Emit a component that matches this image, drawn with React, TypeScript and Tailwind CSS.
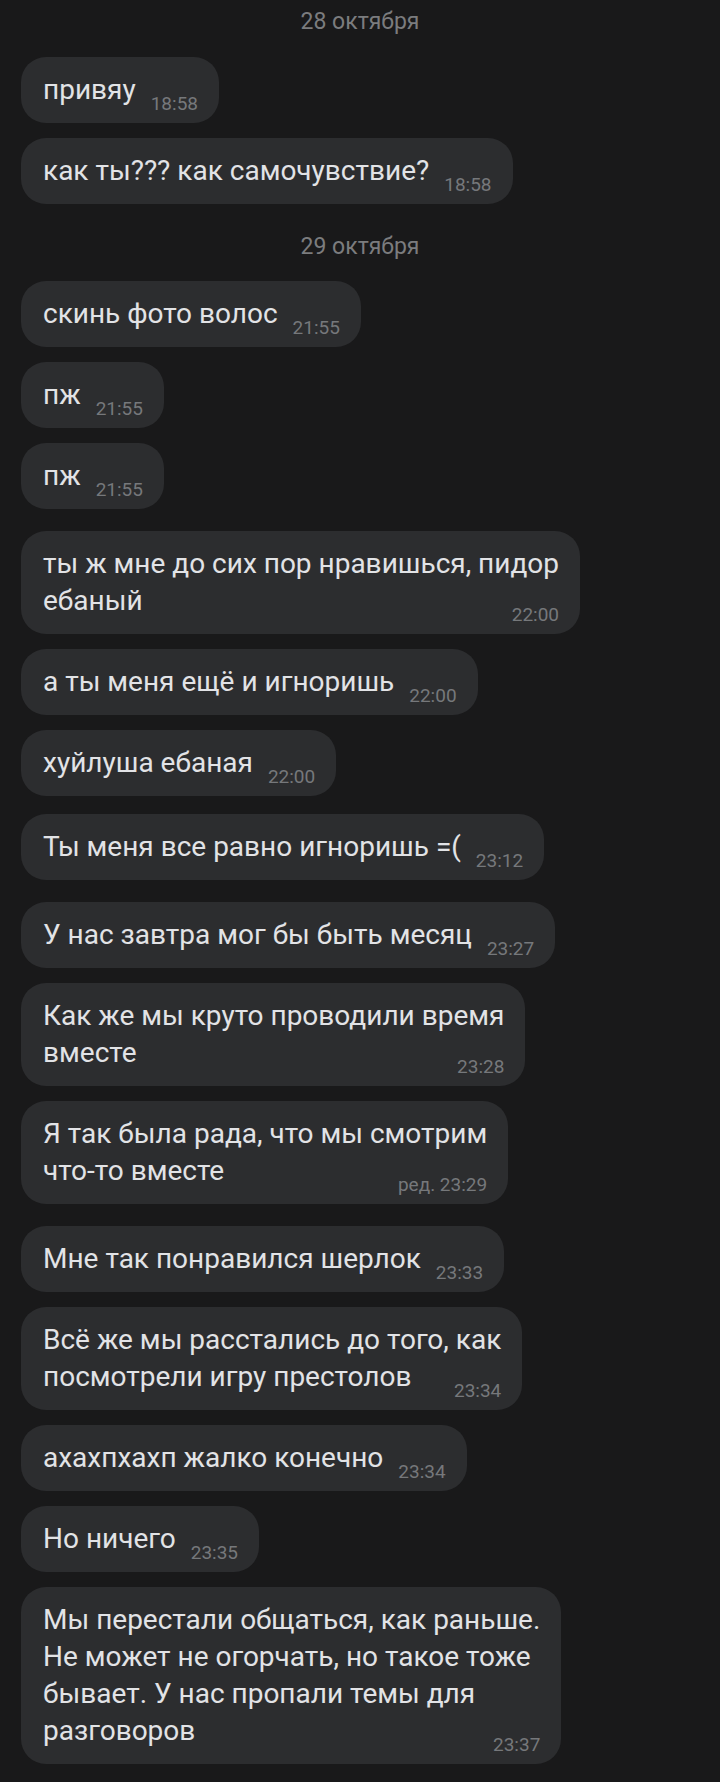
type Item =
  | { kind: "date"; text: string; gap: string }
  | { kind: "msg"; lines: string[]; time: string; gap: string };

const ITEMS: Item[] = [
  { kind: "date", text: "28 октября", gap: "mt-0" },
  { kind: "msg", lines: ["привяу"], time: "18:58", gap: "mt-[13px]" },
  { kind: "msg", lines: ["как ты??? как самочувствие?"], time: "18:58", gap: "mt-[15px]" },
  { kind: "date", text: "29 октября", gap: "mt-[21px]" },
  { kind: "msg", lines: ["скинь фото волос"], time: "21:55", gap: "mt-[12px]" },
  { kind: "msg", lines: ["пж"], time: "21:55", gap: "mt-[15px]" },
  { kind: "msg", lines: ["пж"], time: "21:55", gap: "mt-[15px]" },
  { kind: "msg", lines: ["ты ж мне до сих пор нравишься, пидор", "ебаный"], time: "22:00", gap: "mt-[22px]" },
  { kind: "msg", lines: ["а ты меня ещё и игноришь"], time: "22:00", gap: "mt-[15px]" },
  { kind: "msg", lines: ["хуйлуша ебаная"], time: "22:00", gap: "mt-[15px]" },
  { kind: "msg", lines: ["Ты меня все равно игноришь =("], time: "23:12", gap: "mt-[18px]" },
  { kind: "msg", lines: ["У нас завтра мог бы быть месяц"], time: "23:27", gap: "mt-[22px]" },
  { kind: "msg", lines: ["Как же мы круто проводили время", "вместе"], time: "23:28", gap: "mt-[15px]" },
  { kind: "msg", lines: ["Я так была рада, что мы смотрим", "что-то вместе"], time: "ред. 23:29", gap: "mt-[15px]" },
  { kind: "msg", lines: ["Мне так понравился шерлок"], time: "23:33", gap: "mt-[22px]" },
  { kind: "msg", lines: ["Всё же мы расстались до того, как", "посмотрели игру престолов"], time: "23:34", gap: "mt-[15px]" },
  { kind: "msg", lines: ["ахахпхахп жалко конечно"], time: "23:34", gap: "mt-[15px]" },
  { kind: "msg", lines: ["Но ничего"], time: "23:35", gap: "mt-[15px]" },
  {
    kind: "msg",
    lines: [
      "Мы перестали общаться, как раньше.",
      "Не может не огорчать, но такое тоже",
      "бывает. У нас пропали темы для",
      "разговоров",
    ],
    time: "23:37",
    gap: "mt-[15px]",
  },
];

function DateLabel({ text, gap }: { text: string; gap: string }) {
  return (
    <div className={`${gap} h-[44px] text-center text-[23px] leading-[44px] text-[#7b7c7e]`}>
      {text}
    </div>
  );
}

function Bubble({ lines, time, gap }: { lines: string[]; time: string; gap: string }) {
  const last = lines[lines.length - 1];
  return (
    <div
      className={`${gap} ml-[21px] w-fit whitespace-nowrap rounded-[25px] bg-[#2c2d2f] pl-[22px] pr-[21px] pt-[14px] pb-[15px] text-[28px] leading-[37px] text-[#e2e3e6]`}
    >
      {lines.slice(0, -1).map((l, i) => (
        <div key={i}>{l}</div>
      ))}
      <div className="flex items-end">
        <span>{last}</span>
        <span className="-mb-[5px] ml-auto pl-[15px] text-[19px] leading-[19px] text-[#76787b]">
          {time}
        </span>
      </div>
    </div>
  );
}

export default function App() {
  return (
    <div className="min-h-screen bg-[#19191a] pb-[18px] font-['Roboto',sans-serif]">
      {ITEMS.map((it, i) =>
        it.kind === "date" ? (
          <DateLabel key={i} text={it.text} gap={it.gap} />
        ) : (
          <Bubble key={i} lines={it.lines} time={it.time} gap={it.gap} />
        )
      )}
    </div>
  );
}
